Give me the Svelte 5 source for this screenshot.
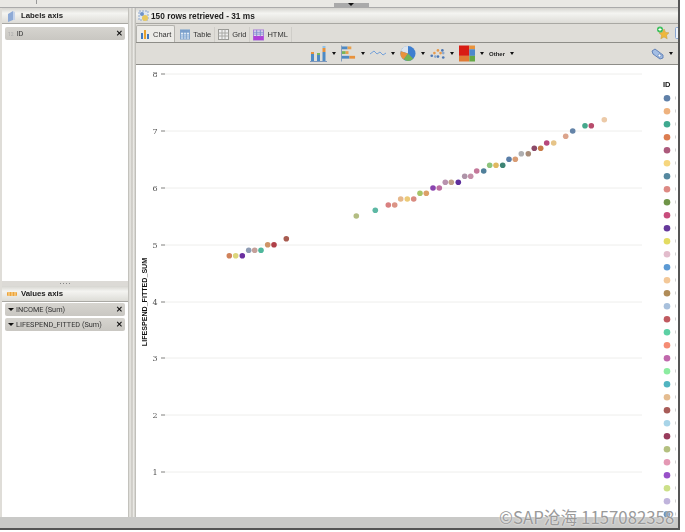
<script>
  const ticks = [[8,73],[7,130],[6,187],[5,244],[4,301],[3,357],[2,414],[1,471]];
  const dots = [
    [230.3,254.7,'#d0825a'],[236.7,254.7,'#dcd67c'],[243.3,254.7,'#6a2fa0'],[249.7,249.3,'#8f9db5'],[255.7,249.3,'#c4a09a'],[262,249.3,'#4fb79c'],
    [268.7,243.7,'#cf9467'],[275,243.7,'#b04048'],[287.3,237.7,'#a85c50'],[357.3,215,'#b3bd82'],[376.3,209.3,'#5db8a4'],[389.3,204,'#d98080'],
    [395.7,204,'#db9486'],[401.7,198,'#e6b88c'],[408.3,198,'#ecca78'],[414.7,198,'#d98b80'],[421,192.3,'#a6c468'],[427.3,192.3,'#dca068'],
    [434,187,'#8a44ae'],[440.3,187,'#bd6ea0'],[446.3,181.3,'#b892ae'],[452.3,181.3,'#c0a088'],[459.3,181.3,'#5e2f9c'],[465.7,175.3,'#ae94a8'],
    [471.7,175.3,'#c490a8'],[477.7,170,'#c4789a'],[484.7,170,'#4f7f9a'],[490.7,164.3,'#8cc47c'],[497,164.3,'#e0b860'],[503.7,164.3,'#3e8474'],
    [510,158.3,'#5a7ea8'],[516.3,158.3,'#d89c74'],[522.3,152.7,'#aeaeb0'],[529.3,152.7,'#a88c78'],[535.3,147.3,'#8c4a68'],[541.7,147.3,'#c87c48'],
    [547.7,142,'#b8487c'],[554.7,142,'#e6c488'],[566.7,135.3,'#dca48c'],[573.7,130,'#6484a8'],[586,124.7,'#45a88c'],[592.3,124.7,'#b84c6c'],[605.3,118.7,'#eccaa8']
  ];
  const legend = ['#5f80a8','#eeb27e','#3fa98f','#dc7d50','#ac5a7c','#f6d67e','#55889f','#dd8a84','#6f9548','#c84c7c','#65399b','#e3dc62','#e2bccc','#5c9ad4','#f3c898','#b08c58','#a8c0dc','#c05a60','#5cd0a4','#f58c74','#c068ac','#8ceca0','#50b4c0','#e4bc90','#a85c58','#a8d4e8','#983c5c','#b4c080','#e498b4','#9850c8','#cce088','#c0b4dc','#6890b8'];
  const tree = ['#d81c14','#e8923c','#4c88cc','#e07a34','#64a844'];
</script>

<div class="page">
  <div class="window">
    <div class="topstrip">
      <i class="tabmark"></i>
      <span class="handle"><b></b></span>
    </div>
    <div class="main">
      <aside class="left">
        <div class="head">
          <svg width="10" height="12" viewBox="0 0 10 12"><path d="M1 4 6 1v9l-5 2z" fill="#8eaad6"/><path d="M6 1l2 1v8l-2 0z" fill="#c5d3ea"/></svg>
          <strong>Labels axis</strong>
        </div>
        <div class="list top">
          <div class="chip"><span class="num">12</span><span class="label">ID</span><span class="x">✕</span></div>
        </div>
        <div class="hsplit"><span></span><span></span><span></span><span></span></div>
        <div class="head">
          <svg width="10" height="8" viewBox="0 0 10 8"><rect x="0" y="2" width="10" height="4" rx="1" fill="#eda43c"/><path d="M2 2v4M5 2v4M8 2v4" stroke="#fbe0a8"/></svg>
          <strong>Values axis</strong>
        </div>
        <div class="list bottom">
          <div class="chip"><span class="tri"></span><span class="label">INCOME (Sum)</span><span class="x">✕</span></div>
          <div class="chip"><span class="tri"></span><span class="label">LIFESPEND_FITTED (Sum)</span><span class="x">✕</span></div>
        </div>
      </aside>
      <div class="vsplit"></div>
      <section class="right">
        <div class="head rhead">
          <svg width="12" height="12" viewBox="0 0 12 12"><rect x="1" y="1" width="9" height="9" fill="#dfe7f2" stroke="#8fa8cc" stroke-dasharray="2 1"/><circle cx="7" cy="8" r="3" fill="#e8c860"/><circle cx="4" cy="4" r="2" fill="#6f92c8"/></svg>
          <strong>150 rows retrieved - 31 ms</strong>
        </div>
        <div class="tabs">
          <div class="tab active">
            <svg width="10" height="10" viewBox="0 0 10 10"><path d="M1 4h2v6H1z" fill="#3f78c0"/><path d="M4 1h2v9H4z" fill="#e6a02c"/><path d="M7 5h2v5H7z" fill="#3f78c0"/></svg>
            <span>Chart</span>
          </div>
          <div class="tab second">
            <svg width="10" height="11" viewBox="0 0 11 11"><rect x=".5" y=".5" width="10" height="10" fill="#e4eef8" stroke="#7ba0cc"/><rect x=".5" y=".5" width="10" height="3" fill="#7ba0cc"/><path d="M4 .5v10M7 .5v10M.5 6h10M.5 8.2h10" stroke="#7ba0cc"/></svg>
            <span>Table</span>
          </div>
          <div class="tab">
            <svg width="11" height="11" viewBox="0 0 11 11"><rect x=".5" y=".5" width="10" height="10" fill="#efefef" stroke="#9a9a96"/><path d="M4 .5v10M7 .5v10M.5 4h10M.5 7h10" stroke="#a8a8a4"/></svg>
            <span>Grid</span>
          </div>
          <div class="tab last">
            <svg width="11" height="12" viewBox="0 0 12 12"><rect x=".5" y=".5" width="11" height="11" fill="#e8e0f4" stroke="#a87ad8"/><rect x=".5" y="7" width="11" height="4.5" fill="#b040d8"/><path d="M4 .5v7M8 .5v7M.5 3h11M.5 5h11" stroke="#7e8ccc"/></svg>
            <span>HTML</span>
          </div>
          <div class="tabtools">
            <svg width="14" height="14" viewBox="0 0 14 14"><path d="M8 3l1.6 3.4 3.4.4-2.5 2.4.7 3.6L8 11l-3.2 1.8.7-3.6L3 6.8l3.4-.4z" fill="#eeb73c" stroke="#c59a3a" stroke-width=".5"/><circle cx="4" cy="3.5" r="3" fill="#3cbf5c"/><path d="M2.4 3.5h3.2M4 1.9v3.2" stroke="#fff"/></svg>
            <svg width="3" height="12" viewBox="0 0 3 12"><rect x=".5" y=".5" width="9" height="11" rx="1" fill="#eef3fa" stroke="#8aa6d0"/></svg>
          </div>
        </div>
        <div class="toolbar">
          <svg width="17" height="17" viewBox="0 0 17 17"><path d="M0 16.5h17" stroke="#7e98bc"/><path d="M1 9h3v7H1z" fill="#4e8ac4"/><path d="M1 7h3v2H1z" fill="#e8923c"/><path d="M7 10h3v6H7z" fill="#4e8ac4"/><path d="M7 8h3v2H7z" fill="#7cb85c"/><path d="M12.500 7h3v9h-3z" fill="#4e8ac4"/><path d="M12.500 3h3v4h-3z" fill="#e8923c"/><path d="M12.500 1h3v2h-3z" fill="#8cc0e8"/></svg><span class="arrow"></span>
          <svg width="15" height="17" viewBox="0 0 16 17"><path d="M.5 0v17" stroke="#7e98bc"/><path d="M1 1h6v3H1z" fill="#4e8ac4"/><path d="M7 1h4v3H7z" fill="#e8a04c"/><path d="M1 6h4v3H1z" fill="#78b458"/><path d="M5 6h3v3H5z" fill="#e8a04c"/><path d="M1 11h8v3H1z" fill="#4e8ac4"/><path d="M9 11h6v3H9z" fill="#e8923c"/></svg><span class="arrow"></span>
          <svg width="16" height="17" viewBox="0 0 16 17"><path d="M0 9l4-3 3 3 3-2 3 3 3-2" fill="none" stroke="#74a0d8" stroke-width="1"/></svg><span class="arrow"></span>
          <svg width="16" height="17" viewBox="0 0 17 17"><circle cx="8.500" cy="8.500" r="8" fill="#3f7fd0"/><path d="M8.500 8.500 8.500.5A8 8 0 0 0 .9 6z" fill="#dce4ee"/><path d="M8.500 8.500.9 6A8 8 0 0 0 4 15z" fill="#e8923c"/><path d="M8.500 8.500 4 15A8 8 0 0 0 14 14z" fill="#74b454"/></svg><span class="arrow"></span>
          <svg width="15" height="17" viewBox="0 0 17 17"><g fill="#4e78b4"><circle cx="2" cy="11" r="1.500"/><circle cx="9" cy="12" r="1.500"/><circle cx="15" cy="13" r="1.500"/><circle cx="14" cy="5" r="1.500"/></g><g fill="#e89a4c"><circle cx="5" cy="8" r="1.500"/><circle cx="12" cy="8" r="1.500"/><circle cx="9" cy="5" r="1.500"/></g><g fill="#8ca8cc"><circle cx="6" cy="12" r="1.500"/><circle cx="15" cy="8" r="1.500"/></g></svg><span class="arrow"></span>
          <svg width="16" height="17" viewBox="0 0 17 17"><path d="M0 0h11v11H0z" fill={tree[0]}/><path d="M11 0h6v4h-6z" fill={tree[1]}/><path d="M11 4h6v7h-6z" fill={tree[2]}/><path d="M0 11h11v6H0z" fill={tree[3]}/><path d="M11 11h6v6h-6z" fill={tree[4]}/></svg><span class="arrow"></span>
          <strong class="other">Other</strong><span class="arrow"></span>
          <svg class="settings" width="13" height="12" viewBox="0 0 13 12"><path d="M1 3 4 1l8 6v3l-3 1L2 6z" fill="#a4bee4" stroke="#4c70ac" stroke-width=".8"/><circle cx="8.500" cy="7.500" r="1.500" fill="#fff" stroke="#4c70ac" stroke-width=".6"/></svg><span class="arrow"></span>
        </div>
        <div class="chart">
          <svg class="plot" width="541" height="453" viewBox="137 64 541 453">
            {#each ticks as [n, y]}
              <line x1="162" x2="643" y1={y} y2={y} stroke="#eeeeec"/>
              <line x1="162" x2="166" y1={y} y2={y} stroke="#888"/>
              <text x="156" y={y + 3} text-anchor="middle" class="tick">{n}</text>
            {/each}
            <text class="ytitle" transform="translate(147.500 301) rotate(-90)" text-anchor="middle">LIFESPEND_FITTED_SUM</text>
            {#each dots as [x, y, c]}
              <circle cx={x} cy={y} r="2.800" fill={c}/>
            {/each}
            <text class="idt" x="664" y="86">ID</text>
            {#each legend as c, i}
              <circle cx="668" cy={97.3 + i * 13} r="3.300" fill={c}/>
              <rect x="676" y={95.500 + i * 13} width="1" height="3" fill="#d4d4d4"/>
            {/each}
          </svg>
        </div>
      </section>
    </div>
    <div class="statusbar"></div>
  </div>
  <div class="watermark">©SAP沧海 1157082358</div>
</div>

<style>
  :global(body) { margin: 0; background: #fff; }
  .page {
    position: relative;
    width: 685px;
    height: 532px;
    overflow: hidden;
    background: #fff;
    font-family: "Liberation Sans", Arial, sans-serif;
    color: #222;
  }
  .window {
    display: flex;
    flex-direction: column;
    width: 678px;
    height: 528px;
    background: #dfddd8;
    border-right: 2px solid #555;
    border-bottom: 2px solid #555;
    filter: blur(0.3px);
  }
  .topstrip {
    flex: 0 0 8px;
    display: flex;
    justify-content: center;
    background: #e9e8e4;
    border-bottom: 1px solid #aaa;
    position: relative;
    box-sizing: border-box;
  }
  .tabmark {
    position: absolute;
    left: 36px;
    top: 0;
    height: 4px;
    border-left: 1px solid #999;
  }
  .handle {
    margin-left: 24px;
    width: 35px;
    height: 4px;
    margin-top: 3px;
    background: #aaa;
    display: flex;
    justify-content: center;
  }
  .handle b {
    width: 0;
    height: 0;
    border-left: 3px solid transparent;
    border-right: 3px solid transparent;
    border-top: 3px solid #111;
  }
  .main { flex: 1; display: flex; min-height: 0; }
  .left {
    flex: 0 0 126px;
    width: 126px;
    min-width: 0;
    margin-left: 2px;
    display: flex;
    flex-direction: column;
    background: #fff;
  }
  .head {
    flex: 0 0 15px;
    display: flex;
    align-items: center;
    gap: 4px;
    padding-left: 5px;
    background: linear-gradient(#d6d5d0, #f4f4f1 35%, #dddcd7);
    border-bottom: 1px solid #a9a8a3;
    font-size: 7.800px;
  }
  .head strong { font-weight: 700; color: #1c1c1c; }
  .list { padding: 3px 3px 0; display: flex; flex-direction: column; background: #fff; }
  .list.top { flex: 1; }
  .list.bottom { flex: 0 0 215px; box-sizing: border-box; padding-top: 1px; gap: 2px; }
  .chip {
    height: 13px;
    display: flex;
    align-items: center;
    padding: 0 2px 0 2px;
    border-radius: 2px;
    background: linear-gradient(#d6d4cf, #c9c7c2);
    font: 7.300px Roboto, "Liberation Sans", sans-serif;
    color: #333;
  }
  .num { font-size: 5px; color: #aaa; margin-right: 3px; margin-left: 1px; }
  .label { flex: 1; min-width: 0; white-space: nowrap; }
  .tri {
    width: 0;
    height: 0;
    margin: 0 2px 0 1px;
    border-left: 3px solid transparent;
    border-right: 3px solid transparent;
    border-top: 3px solid #111;
  }
  .x { font-size: 8px; font-weight: 700; color: #111; }
  .hsplit {
    flex: 0 0 5px;
    display: flex;
    justify-content: center;
    align-items: center;
    gap: 2px;
    background: #dcdad6;
  }
  .hsplit span { width: 1px; height: 1px; background: #888; }
  .vsplit {
    flex: 0 0 8px;
    background: linear-gradient(90deg, #b5b4ae, #ecebe7 25%, #c6c4be 50%, #ecebe7 70%, #b5b4ae);
  }
  .right { flex: 1; display: flex; flex-direction: column; min-width: 0; }
  .rhead { padding-left: 2px; gap: 1px; font-size: 8.300px; }
  .tabs {
    flex: 0 0 19px;
    display: flex;
    align-items: flex-end;
    background: #dfddd8;
    border-bottom: 1px solid #8e8d88;
    box-sizing: border-box;
  }
  .tab {
    height: 15px;
    display: flex;
    align-items: center;
    gap: 3px;
    padding: 0 3px;
    font-size: 7.500px;
    color: #333;
    border-right: 1px solid #cfcdc8;
  }
  .tab.active {
    background: #ecebe7;
    border: 1px solid #b3b2ad;
    border-bottom: 0;
    border-radius: 2px 2px 0 0;
    height: 16px;
  }
  .tab.second { padding-left: 5px; }
  .tabtools {
    margin-left: auto;
    align-self: center;
    display: flex;
    align-items: center;
    gap: 5px;
  }
  .toolbar {
    flex: 0 0 22px;
    display: flex;
    align-items: center;
    background: #dfddd8;
    border-bottom: 1px solid #8e8d88;
    box-sizing: border-box;
    padding-left: 174px;
  }
  .settings { margin-left: auto; }
  .arrow {
    width: 0;
    height: 0;
    margin: 0 5px;
    border-left: 2.500px solid transparent;
    border-right: 2.500px solid transparent;
    border-top: 3px solid #111;
  }
  .other { width: 16px; font-size: 6px; font-weight: 700; color: #222; }
  .chart { flex: 1; background: #fff; min-height: 0; }
  .plot { display: block; }
  .tick { font: 8px "DejaVu Serif", "Liberation Serif", serif; fill: #555; }
  .ytitle { font: 700 7.100px "Liberation Sans", Arial, sans-serif; fill: #111; }
  .idt { font: 700 7.500px "Liberation Sans", sans-serif; fill: #111; }
  .statusbar { flex: 0 0 11px; background: #c9c9c7; }
  .watermark {
    position: absolute;
    left: 499px;
    top: 508px;
    font: 16.800px "Noto Sans CJK SC", "Liberation Sans", sans-serif;
    line-height: 18px;
    white-space: nowrap;
    color: #9a9a9a;
    text-shadow: 0 0 2px #fff;
  }
</style>
